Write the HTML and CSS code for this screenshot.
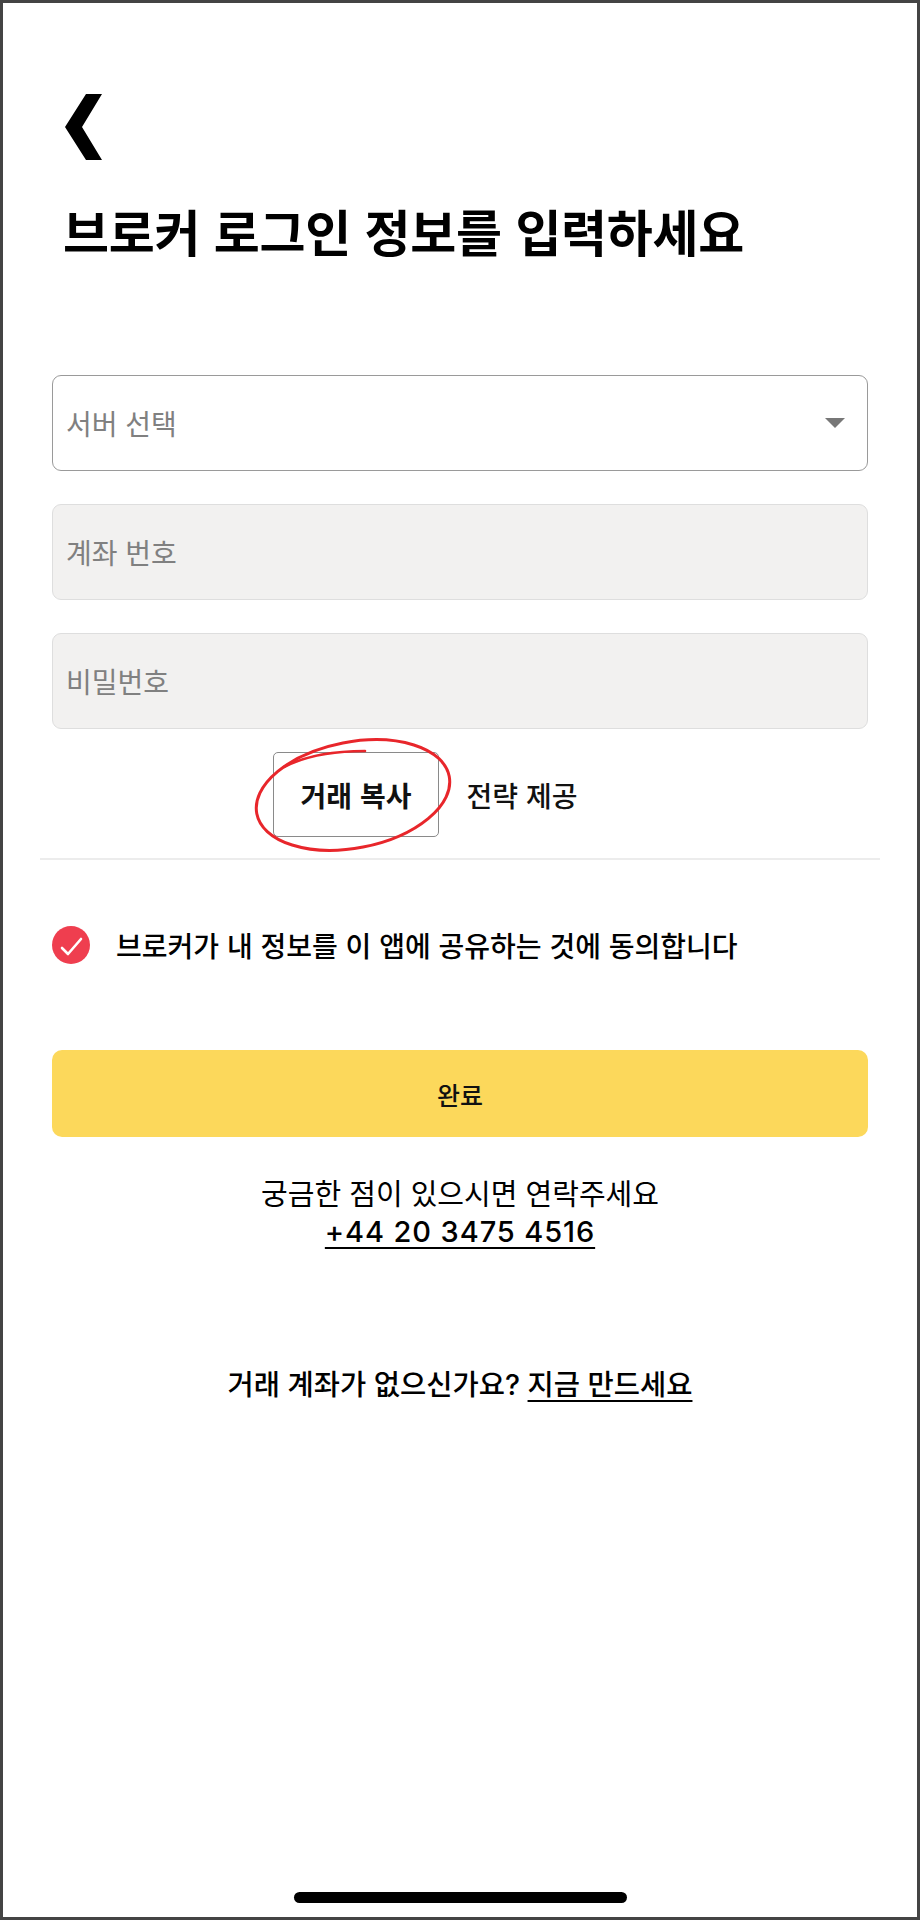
FILE: index.html
```html
<!DOCTYPE html>
<html lang="ko">
<head>
<meta charset="utf-8">
<title>브로커 로그인</title>
<link rel="stylesheet" href="styles.css">
</head>
<body>
<div class="screen">
  <header class="top">
    <button class="back" type="button" aria-label="뒤로">
      <svg width="37" height="66" viewBox="0 0 37 66"><polygon points="21,0 37,0 17,33 37,66 21,66 0,33" fill="#000"/></svg>
    </button>
  </header>

  <h1 class="title">브로커 로그인 정보를 입력하세요</h1>

  <div class="form">
    <div class="field field-select"><span class="placeholder">서버 선택</span><span class="caret"></span></div>
    <div class="field field-input"><span class="placeholder">계좌 번호</span></div>
    <div class="field field-input"><span class="placeholder">비밀번호</span></div>
  </div>

  <div class="tabs">
    <div class="tab tab-active">거래 복사
      <svg class="scribble" width="210" height="124" viewBox="0 0 210 124">
        <ellipse cx="102" cy="61" rx="98" ry="53" transform="rotate(-11 102 61)" fill="none" stroke="#e8262b" stroke-width="3"/>
        <path d="M33 33 Q64 17 114 17" fill="none" stroke="#e8262b" stroke-width="2.6" stroke-linecap="round"/>
      </svg>
    </div>
    <div class="tab">전략 제공</div>
  </div>

  <div class="divider"></div>

  <label class="consent">
    <span class="check"><svg width="38" height="38" viewBox="0 0 38 38"><circle cx="19" cy="19" r="19" fill="#ef3e4f"/><polyline points="10,22 16,28 29,13" fill="none" stroke="#fff" stroke-width="2.6" stroke-linecap="round" stroke-linejoin="round"/></svg></span>
    <span class="consent-text">브로커가 내 정보를 이 앱에 공유하는 것에 동의합니다</span>
  </label>

  <button class="submit" type="button">완료</button>

  <div class="contact">
    <p class="contact-line">궁금한 점이 있으시면 연락주세요</p>
    <a class="phone">+44 20 3475 4516</a>
  </div>

  <p class="signup">거래 계좌가 없으신가요? <a class="signup-link">지금 만드세요</a></p>

  <div class="home-indicator"></div>
</div>
</body>
</html>
```

FILE: styles.css
```css
* { box-sizing: border-box; }
html, body { margin: 0; padding: 0; background: #fff; }
body {
  font-family: "Inter", "Noto Sans CJK KR", sans-serif;
  color: #000;
}
.screen {
  width: 920px;
  height: 1920px;
  border: 3px solid #444;
  padding: 0 49px;
  display: flex;
  flex-direction: column;
  background: #fff;
}
.top { height: 157px; padding-top: 91px; }
.back {
  margin: 0 0 0 13px;
  padding: 0;
  border: 0;
  background: none;
  display: block;
  width: 37px;
  height: 66px;
}
.back svg { display: block; }

.title {
  margin: 42px 0 0 11px;
  font-family: "Noto Sans CJK KR", sans-serif;
  font-size: 50px;
  line-height: 56px;
  font-weight: 700;
  letter-spacing: -0.3px;
}

.form {
  margin-top: 117px;
  display: flex;
  flex-direction: column;
  gap: 33px;
}
.field {
  height: 96px;
  border-radius: 9px;
  display: flex;
  align-items: center;
  justify-content: space-between;
  padding: 0 22px 0 13px;
  font-family: "Noto Sans CJK KR", sans-serif;
  font-size: 28px;
}
.field-select { border: 1px solid #9a9a9a; background: #fff; }
.field-input { border: 1px solid #dedede; background: #f2f1f0; }
.placeholder { color: #808080; }
.caret {
  width: 0;
  height: 0;
  border-left: 10.5px solid transparent;
  border-right: 10.5px solid transparent;
  border-top: 10px solid #777;
}

.tabs {
  margin-top: 23px;
  display: flex;
  padding-left: 221px;
  font-family: "Noto Sans CJK KR", sans-serif;
  font-size: 28px;
}
.tab {
  position: relative;
  height: 85px;
  width: 166px;
  display: flex;
  align-items: center;
  justify-content: center;
  font-weight: 500;
  color: #111;
}
.tab-active {
  border: 1px solid #8a8a8a;
  border-radius: 5px;
  font-weight: 700;
}
.scribble {
  position: absolute;
  left: -23px;
  top: -19px;
  pointer-events: none;
}

.divider {
  margin: 21px -12px 0;
  height: 2px;
  background: #ececec;
}

.consent {
  margin-top: 66px;
  display: flex;
  align-items: center;
  gap: 26px;
  font-family: "Noto Sans CJK KR", sans-serif;
  font-size: 28px;
  font-weight: 500;
  line-height: 38px;
}
.check { display: block; width: 38px; height: 38px; }
.check svg { display: block; }

.submit {
  margin-top: 86px;
  height: 87px;
  width: 100%;
  border: 0;
  border-radius: 10px;
  background: #fcd85b;
  font-family: "Noto Sans CJK KR", sans-serif;
  font-size: 25px;
  font-weight: 500;
  color: #111;
}

.contact {
  margin-top: 36px;
  display: flex;
  flex-direction: column;
  align-items: center;
  line-height: 39px;
}
.contact-line {
  margin: 0;
  font-family: "Noto Sans CJK KR", sans-serif;
  font-size: 29px;
  font-weight: 400;
}
.phone {
  font-family: "Inter", sans-serif;
  font-size: 29px;
  font-weight: 500;
  letter-spacing: 0.9px;
  text-decoration: underline;
  text-decoration-thickness: 2px;
  text-underline-offset: 5px;
  color: #000;
}

.signup {
  margin: 114px 0 0;
  text-align: center;
  font-size: 28.5px;
  font-weight: 500;
  line-height: 40px;
}
.signup-link {
  text-decoration: underline;
  text-decoration-thickness: 2px;
  text-underline-offset: 5px;
  color: #000;
}

.home-indicator {
  margin: auto auto 14px;
  width: 333px;
  height: 11px;
  border-radius: 6px;
  background: #000;
}
```
